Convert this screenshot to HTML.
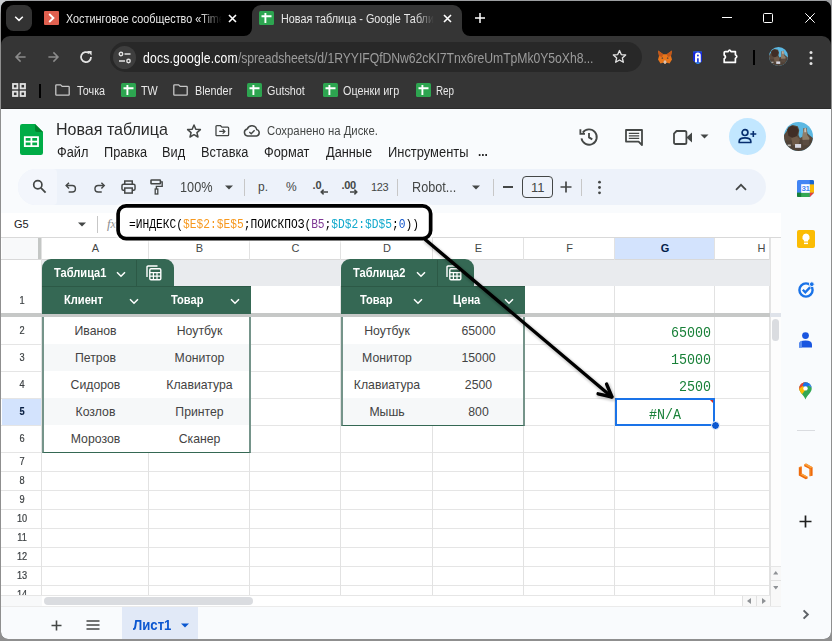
<!DOCTYPE html>
<html lang="ru">
<head>
<meta charset="utf-8">
<title>Новая таблица - Google Таблицы</title>
<style>
*{box-sizing:border-box;margin:0;padding:0}
html,body{width:832px;height:641px;overflow:hidden}
body{font-family:"Liberation Sans",sans-serif;background:#8f8f8f;position:relative}
.a{position:absolute}
.t{position:absolute;white-space:nowrap;line-height:1}
#edge{left:0;top:0;width:832px;height:641px;background:radial-gradient(circle at 0 0,#cbced2 0,#cbced2 4px,rgba(203,206,210,0) 14px),linear-gradient(180deg,#9c9ea1 0,#9c9ea1 2px,#8f8f8f 24px)}
#win{left:1px;top:1.1px;width:829.6px;height:638px;border-radius:7px 7px 7px 7px;overflow:hidden;background:#000}
/* chrome */
#tabstrip{left:0;top:0;width:830px;height:36px;background:#000}
#tbar{left:0;top:35px;width:830px;height:73px;background:#353535;border-radius:9px 9px 0 0;border-bottom:1px solid #2c2c2c}
#page{left:0;top:108px;width:830px;height:530px;background:#f9fbfd}
.ct{color:#e8e8e8;font-size:12px;transform:scaleX(.9);transform-origin:0 0}
/* sheets */
.menu{font-size:14px;color:#1f1f1f;top:36px;transform:scaleX(.912);transform-origin:0 0}
#pill{left:17px;top:60px;width:748px;height:36px;border-radius:18px;background:#edf2fa}
.sep{position:absolute;top:70px;width:1px;height:17px;background:#c7c7c7}
#grid{left:0;top:104px;width:780px;height:394px;background:#fff;overflow:hidden}
.vl{position:absolute;width:1px;margin-left:-.6px;background:#e2e2e2;top:26px;height:362px}
.hl{position:absolute;height:1px;background:#e5e5e5;left:0;width:770px}
.ch{position:absolute;top:25px;height:20px;font-size:11px;color:#444746;text-align:center;line-height:20px}
.rh{position:absolute;left:1px;width:40px;font-size:10px;color:#3c4043;text-align:center;transform:scaleX(.92);margin-top:-.2px;-webkit-text-stroke:.2px #3c4043}
.cell{position:absolute;font-size:12.25px;color:#434343;text-align:center;height:27px;line-height:28.5px;white-space:nowrap}
.hd{position:absolute;font-size:12px;color:#fff;font-weight:bold;white-space:nowrap;line-height:1;transform:scaleX(.925);transform-origin:0 0}
.g{background:#356854}
.mono{font-family:"Liberation Mono",monospace}
.gm{transform:scaleY(1.1);color:#23803f}
</style>
</head>
<body>
<svg width="0" height="0" style="position:absolute"><defs>
<clipPath id="avc"><circle cx="10" cy="10" r="10"/></clipPath>
<filter id="avb" x="-10%" y="-10%" width="120%" height="120%"><feGaussianBlur stdDeviation=".45"/></filter>
<g id="av"><g clip-path="url(#avc)"><rect width="20" height="20" fill="#5cb8e2"/><g filter="url(#avb)">
<path d="M0 9 L2 6 L3 3.5 L6 2 L9.5 3 L10.5 5.5 L10 9 L11 11 L13 10 L13.2 4.5 L15.5 4 L16.2 8 L18 9.5 L20 11 V20 H0Z" fill="#5a4a3c"/>
<path d="M2.2 5 L5 2.6 L9 3.4 L10 6 L9 9.5 L6 11 L3 9.5Z" fill="#3f2f27"/>
<path d="M13.4 4.6 L15.4 4.2 L16 9 L17.5 11 L17 16 L13 16 L12.6 10.5Z" fill="#8d7d69"/>
<path d="M14 4.4 L15.2 4.2 L15.4 7 L14 7Z" fill="#c9c3bb"/>
<path d="M0 13 L20 12 V20 H0Z" fill="#4e4036" opacity=".8"/>
<path d="M5 11 L9 10 L11 12 L10 16 L6 16Z" fill="#6e5a48"/>
<rect x="7.6" y="15.2" width="4.2" height="2.6" fill="#d8d8e2"/>
<rect x="2.5" y="15.5" width="2.2" height="1.2" fill="#b9b5b0"/>
</g></g></g></defs></svg>
<div id="edge" class="a"></div>
<div id="win" class="a">
<div id="tabstrip" class="a"></div>
<!--CHROME-->
<!-- tab search button -->
<div class="a" style="left:5.2px;top:3.9px;width:25.4px;height:26.1px;border-radius:7.5px;background:#333"></div>
<svg class="a" style="left:12px;top:12.5px" width="12" height="10" viewBox="0 0 12 10"><path d="M2.2 2.8 L6 6.4 L9.8 2.8" fill="none" stroke="#fff" stroke-width="1.5"/></svg>
<!-- tab 1 -->
<div class="a" style="left:43px;top:10px;width:15px;height:14px;background:#e0604f;border-radius:1px"></div>
<svg class="a" style="left:43px;top:10px" width="15" height="14" viewBox="0 0 15 14"><path d="M5.2 3 L9.4 7 L5.2 11" fill="none" stroke="#fff" stroke-width="1.9"/></svg>
<div class="t ct" id="tab1" style="left:65px;top:11.7px;width:173px;overflow:hidden;-webkit-mask-image:linear-gradient(90deg,#000 150px,transparent 173px)">Хостинговое сообщество «Timeweb</div>
<svg class="a" style="left:226px;top:12px" width="11" height="11" viewBox="0 0 11 11"><path d="M2 2 L9 9 M9 2 L2 9" stroke="#fff" stroke-width="1.6"/></svg>
<!-- active tab -->
<div class="a" style="left:251px;top:4.2px;width:210px;height:31.8px;background:#353535;border-radius:9px 9px 0 0"></div>
<svg class="a" style="left:243px;top:27px" width="8" height="8" viewBox="0 0 8 8"><path d="M8 0 V8 H0 A8 8 0 0 0 8 0Z" fill="#353535"/></svg>
<svg class="a" style="left:461px;top:27px" width="8" height="8" viewBox="0 0 8 8"><path d="M0 0 V8 H8 A8 8 0 0 1 0 0Z" fill="#353535"/></svg>
<svg class="a shi" style="left:258px;top:10px" width="15" height="14" viewBox="0 0 15 14"><rect width="15" height="14" rx="1.5" fill="#2da550"/><path d="M2.5 5.2 H12.5 M6.4 2 V12" stroke="#fff" stroke-width="1.9"/></svg>
<div class="t ct" id="tab2" style="left:280.4px;top:11.7px;width:170px;overflow:hidden;-webkit-mask-image:linear-gradient(90deg,#000 150px,transparent 170px)">Новая таблица - Google Таблицы</div>
<svg class="a" style="left:441px;top:12px" width="11" height="11" viewBox="0 0 11 11"><path d="M2 2 L9 9 M9 2 L2 9" stroke="#fff" stroke-width="1.6"/></svg>
<svg class="a" style="left:473px;top:11px" width="12" height="12" viewBox="0 0 12 12"><path d="M6 1 V11 M1 6 H11" stroke="#fff" stroke-width="1.5"/></svg>
<!-- window controls -->
<div class="a" style="left:721px;top:16px;width:10px;height:1px;background:#fff"></div>
<div class="a" style="left:762px;top:12px;width:10px;height:10px;border:1px solid #fff;border-radius:1.5px"></div>
<svg class="a" style="left:804px;top:12px" width="10" height="10" viewBox="0 0 10 10"><path d="M0.3 0.3 L9.7 9.7 M9.7 0.3 L0.3 9.7" stroke="#fff" stroke-width="1"/></svg>
<!--/CHROME-->
<div id="tbar" class="a"></div>
<!--TB-->
<!-- nav -->
<svg class="a" style="left:12px;top:49px" width="14" height="14" viewBox="0 0 14 14"><path d="M12.6 7 H3.2 M7.6 2.4 L3 7 L7.6 11.6" fill="none" stroke="#8b8b8b" stroke-width="1.5"/></svg>
<svg class="a" style="left:45px;top:49px" width="14" height="14" viewBox="0 0 14 14"><path d="M2.4 7 H11.8 M7.4 2.4 L12 7 L7.4 11.6" fill="none" stroke="#8b8b8b" stroke-width="1.5"/></svg>
<svg class="a" style="left:78px;top:49px" width="14" height="14" viewBox="0 0 14 14"><path d="M12 7 A5 5 0 1 1 10.2 3.2" fill="none" stroke="#e3e3e3" stroke-width="1.8"/><path d="M8 1 H12.6 V5.6 Z" fill="#e3e3e3"/></svg>
<div class="a" style="left:109px;top:41.3px;width:532px;height:29.6px;border-radius:15px;background:#282828"></div>
<div class="a" style="left:112px;top:45px;width:23px;height:23px;border-radius:12px;background:#3e3e3e"></div>
<svg class="a" style="left:117px;top:50px" width="14" height="13" viewBox="0 0 14 13"><path d="M6.5 3 H12.5 M1 10 H7" stroke="#e3e3e3" stroke-width="1.5"/><circle cx="3" cy="3" r="1.7" fill="none" stroke="#e3e3e3" stroke-width="1.4"/><circle cx="10.5" cy="10" r="1.7" fill="none" stroke="#e3e3e3" stroke-width="1.4"/></svg>
<div class="t" id="url" style="left:142px;top:49.5px;font-size:14px;color:#9c9c9c;transform:scaleX(.873);transform-origin:0 0"><span style="color:#fff;letter-spacing:.19px">docs.google.com</span><span style="letter-spacing:-.06px">/spreadsheets/d/1RYYIFQfDNw62cKI7Tnx6reUmTpMk0Y5oXh8...</span></div>
<svg class="a" style="left:610px;top:47.2px" width="17" height="17" viewBox="0 0 24 24"><path d="M12 3.6 L14.5 9.3 L20.7 9.9 L16 14 L17.4 20.1 L12 16.9 L6.6 20.1 L8 14 L3.3 9.9 L9.5 9.3 Z" fill="none" stroke="#e3e3e3" stroke-width="1.9" stroke-linejoin="round"/></svg>
<!-- metamask fox -->
<svg class="a" style="left:656px;top:49px" width="16" height="15" viewBox="0 0 16 15"><path d="M1 0.5 L6.3 4.2 H9.7 L15 0.5 L14 6 L15 9.5 L12.5 13.5 L9.5 12.6 L8.6 13.8 H7.4 L6.5 12.6 L3.5 13.5 L1 9.5 L2 6 Z" fill="#e8761b"/><path d="M1 0.5 L6.3 4.2 L5 7 L2 6Z M15 0.5 L9.7 4.2 L11 7 L14 6Z" fill="#c4571a"/><path d="M6.5 12.6 L7 10.5 H9 L9.5 12.6 L8.6 13.8 H7.4Z" fill="#d7c1b3"/><path d="M5 7 L6.3 8.6 L4.6 8.8Z M11 7 L9.7 8.6 L11.4 8.8Z" fill="#233447"/></svg>
<!-- shield -->
<svg class="a" style="left:691.6px;top:49.6px" width="9.8" height="13.7" viewBox="0 0 9.6 13.4"><defs><linearGradient id="shg" x1="0" y1="0" x2="0" y2="1"><stop offset="0" stop-color="#2b6cf0"/><stop offset=".15" stop-color="#1624d6"/><stop offset=".75" stop-color="#1830dc"/><stop offset="1" stop-color="#2eb4f4"/></linearGradient></defs><path d="M0 0.6 L4.8 0 L9.6 0.6 V9.6 L4.8 13.4 L0 9.6Z" fill="url(#shg)"/><path d="M2 11 V4.2 A2.8 2.8 0 0 1 7.6 4.2 V11 H5.6 V7 H4 V11Z" fill="#fff"/><circle cx="4.8" cy="4.4" r=".9" fill="#1830dc"/></svg>
<!-- puzzle -->
<svg class="a" style="left:721px;top:47px" width="17" height="16" viewBox="0 0 17 16"><path d="M3.2 3.6 H6.2 Q7.6 0.8 9 3.6 H13.4 V6.8 Q16.2 8.6 13.4 10.4 V14.4 H2.2 V10.8 Q4.8 9 2.2 7 V4.6 Q2.2 3.6 3.2 3.6Z" fill="none" stroke="#fff" stroke-width="1.7" stroke-linejoin="round"/></svg>
<div class="a" style="left:752px;top:49px;width:2px;height:15px;background:#000"></div>
<!-- avatar -->
<svg class="a" style="left:768.2px;top:46.4px" width="19" height="19" viewBox="0 0 20 20"><use href="#av"/></svg>
<svg class="a" style="left:807px;top:49px" width="6" height="16" viewBox="0 0 6 16"><circle cx="3" cy="2.5" r="1.5" fill="#e3e3e3"/><circle cx="3" cy="8" r="1.5" fill="#e3e3e3"/><circle cx="3" cy="13.5" r="1.5" fill="#e3e3e3"/></svg>

<svg class="a" style="left:11px;top:82px" width="14" height="14" viewBox="0 0 14 14"><g fill="none" stroke="#e3e3e3" stroke-width="1.8"><rect x="1" y="1" width="4.4" height="4.4"/><rect x="8.6" y="1" width="4.4" height="4.4"/><rect x="1" y="8.6" width="4.4" height="4.4"/><rect x="8.6" y="8.6" width="4.4" height="4.4"/></g></svg>
<div class="a" style="left:38px;top:83px;width:2px;height:14px;background:#000"></div>
<svg class="a" style="left:54px;top:83px" width="15" height="12" viewBox="0 0 15 12"><path d="M1.5 0.8 H5.6 L7.2 2.4 H13.5 Q14.2 2.4 14.2 3.1 V10.5 Q14.2 11.2 13.5 11.2 H1.5 Q0.8 11.2 0.8 10.5 V1.5 Q0.8 0.8 1.5 0.8Z" fill="none" stroke="#c7c7c7" stroke-width="1.3"/></svg><div class="t ct" id="bm1" style="left:76px;top:84px">Точка</div><svg class="a" style="left:120px;top:82px" width="15" height="14" viewBox="0 0 15 14"><rect width="15" height="14" rx="1.5" fill="#2da550"/><path d="M2.5 5.2 H12.5 M6.4 2 V12" stroke="#fff" stroke-width="1.9"/></svg><div class="t ct" id="bm2" style="left:140px;top:84px">TW</div><svg class="a" style="left:172px;top:83px" width="15" height="12" viewBox="0 0 15 12"><path d="M1.5 0.8 H5.6 L7.2 2.4 H13.5 Q14.2 2.4 14.2 3.1 V10.5 Q14.2 11.2 13.5 11.2 H1.5 Q0.8 11.2 0.8 10.5 V1.5 Q0.8 0.8 1.5 0.8Z" fill="none" stroke="#c7c7c7" stroke-width="1.3"/></svg><div class="t ct" id="bm3" style="left:194px;top:84px">Blender</div><svg class="a" style="left:246px;top:82px" width="15" height="14" viewBox="0 0 15 14"><rect width="15" height="14" rx="1.5" fill="#2da550"/><path d="M2.5 5.2 H12.5 M6.4 2 V12" stroke="#fff" stroke-width="1.9"/></svg><div class="t ct" id="bm4" style="left:266px;top:84px">Gutshot</div><svg class="a" style="left:322px;top:82px" width="15" height="14" viewBox="0 0 15 14"><rect width="15" height="14" rx="1.5" fill="#2da550"/><path d="M2.5 5.2 H12.5 M6.4 2 V12" stroke="#fff" stroke-width="1.9"/></svg><div class="t ct" id="bm5" style="left:342px;top:84px">Оценки игр</div><svg class="a" style="left:415px;top:82px" width="15" height="14" viewBox="0 0 15 14"><rect width="15" height="14" rx="1.5" fill="#2da550"/><path d="M2.5 5.2 H12.5 M6.4 2 V12" stroke="#fff" stroke-width="1.9"/></svg><div class="t ct" id="bm6" style="left:435px;top:84px;transform:scaleX(.82)">Rep</div>
<!--/TB-->
<div id="page" class="a">

<!-- sheets logo -->
<svg class="a" style="left:19.3px;top:14.5px" width="23" height="31" viewBox="0 0 23 31"><path d="M2.2 0 H15 L23 8 V28.8 Q23 31 20.8 31 H2.2 Q0 31 0 28.8 V2.2 Q0 0 2.2 0Z" fill="#00ac47"/><path d="M15 0 L23 8 H17 Q15 8 15 6Z" fill="#00832d"/><path d="M3.9 12.2 H18.9 V23.1 H3.9Z M5.7 14 V16.8 H10.5 V14Z M12.3 14 V16.8 H17.1 V14Z M5.7 18.5 V21.3 H10.5 V18.5Z M12.3 18.5 V21.3 H17.1 V18.5Z" fill="#fff" fill-rule="evenodd"/></svg>
<div class="t" id="title" style="left:55px;top:13.2px;font-size:16.6px;color:#2a2a2a;transform:scaleX(.967);transform-origin:0 0">Новая таблица</div>
<!-- star -->
<svg class="a" style="left:184px;top:13px" width="18" height="18" viewBox="0 0 24 24"><path d="M12 4 L14.4 9.6 L20.5 10.1 L15.9 14.1 L17.3 20 L12 16.9 L6.7 20 L8.1 14.1 L3.5 10.1 L9.6 9.6 Z" fill="none" stroke="#444746" stroke-width="2" stroke-linejoin="round"/></svg>
<!-- move -->
<svg class="a" style="left:214.3px;top:16.2px" width="14.6" height="11.4" viewBox="0 0 16 13"><path d="M1.8 0.8 H6 L7.6 2.4 H14.2 Q15.2 2.4 15.2 3.4 V11.2 Q15.2 12.2 14.2 12.2 H1.8 Q0.8 12.2 0.8 11.2 V1.8 Q0.8 0.8 1.8 0.8Z" fill="none" stroke="#444746" stroke-width="1.5"/><path d="M4.5 7.3 H10.5 M8.4 4.8 L11 7.3 L8.4 9.8" fill="none" stroke="#444746" stroke-width="1.4"/></svg>
<!-- cloud -->
<svg class="a" style="left:242px;top:15px" width="18" height="13" viewBox="0 0 18 13"><path d="M4.6 12 A3.6 3.6 0 0 1 4.3 4.9 A5 5 0 0 1 13.8 5.6 A3.3 3.3 0 0 1 13.6 12 Z" fill="none" stroke="#444746" stroke-width="1.5"/><path d="M6.3 8 L8.2 9.8 L11.6 6.2" fill="none" stroke="#444746" stroke-width="1.4"/></svg>
<div class="t" id="saved" style="left:266px;top:16px;font-size:12px;color:#444746;transform:scaleX(.945);transform-origin:0 0">Сохранено на Диске.</div>
<div class="t menu" id="m1" style="left:56px">Файл</div>
<div class="t menu" id="m2" style="left:103px">Правка</div>
<div class="t menu" id="m3" style="left:161px">Вид</div>
<div class="t menu" id="m4" style="left:200px">Вставка</div>
<div class="t menu" id="m5" style="left:263px">Формат</div>
<div class="t menu" id="m6" style="left:325px">Данные</div>
<div class="t menu" id="m7" style="left:387px;transform:scaleX(.922)">Инструменты</div>
<div class="t menu" id="m8" style="left:477px;font-weight:bold;font-size:13px;letter-spacing:0">...</div>
<!-- history -->
<svg class="a" style="left:577px;top:17px" width="22" height="22" viewBox="0 0 24 24"><path d="M5.2 7.2 A8.4 8.4 0 1 1 3.8 13.5" fill="none" stroke="#444746" stroke-width="2"/><path d="M2.6 3.6 V8.6 H7.6" fill="none" stroke="#444746" stroke-width="2"/><path d="M12 7.5 V12.4 L15.6 14.6" fill="none" stroke="#444746" stroke-width="2"/></svg>
<!-- comment -->
<svg class="a" style="left:623.6px;top:19.5px" width="18" height="17" viewBox="0 0 18 17"><path d="M1 1 H17 V16 L13.6 12.6 H1 Z" fill="none" stroke="#444746" stroke-width="1.8" stroke-linejoin="round"/><path d="M3.8 4.4 H14.2 M3.8 6.9 H14.2 M3.8 9.4 H14.2" stroke="#444746" stroke-width="1.2"/></svg>
<!-- video -->
<svg class="a" style="left:672px;top:21px" width="20" height="15" viewBox="0 0 20 15"><path d="M3.6 1 H11.8 Q13.4 1 13.4 2.6 V12.4 Q13.4 14 11.8 14 H2.6 Q1 14 1 12.4 V3.6 Z" fill="none" stroke="#444746" stroke-width="1.8" stroke-linejoin="round"/><path d="M13.4 7.5 L19 2.6 V12.4 Z" fill="#444746"/></svg>
<svg class="a" style="left:699px;top:25px" width="9" height="5" viewBox="0 0 9 5"><path d="M0.5 0.5 H8.5 L4.5 4.5Z" fill="#444746"/></svg>
<!-- share -->
<div class="a" style="left:728px;top:9px;width:37px;height:37px;border-radius:19px;background:#c2e7ff"></div>
<svg class="a" style="left:737px;top:19px" width="19" height="16" viewBox="0 0 19 16"><circle cx="7" cy="4.6" r="2.9" fill="none" stroke="#062e6f" stroke-width="1.7"/><path d="M1.2 14.5 V13.2 Q1.2 9.8 7 9.8 Q12.8 9.8 12.8 13.2 V14.5 Z" fill="none" stroke="#062e6f" stroke-width="1.7" stroke-linejoin="round"/><path d="M15.3 3 V9 M12.3 6 H18.3" stroke="#062e6f" stroke-width="1.6"/></svg>
<!-- avatar -->
<svg class="a" style="left:783px;top:13.3px" width="29" height="29" viewBox="0 0 20 20"><use href="#av"/></svg>
<div id="pill" class="a"></div>
<div class="a" style="left:17px;top:60px;width:39px;height:36px;border-radius:18px 4px 4px 18px;background:#f3f6fc"></div>
<!--PILL-->
<svg class="a" style="left:31px;top:70px" width="15" height="15" viewBox="0 0 15 15"><circle cx="5.8" cy="5.8" r="4.1" fill="none" stroke="#444746" stroke-width="1.7"/><path d="M8.9 8.9 L13.6 13.6" stroke="#444746" stroke-width="1.8"/></svg>
<!-- undo -->
<svg class="a" style="left:63.2px;top:71.4px" width="13.4" height="13.4" viewBox="0 0 15 15"><path d="M3 6.2 H9.2 A3.6 3.6 0 0 1 9.2 13.4 H5.2" fill="none" stroke="#444746" stroke-width="1.6"/><path d="M5.6 3 L2.4 6.2 L5.6 9.4" fill="none" stroke="#444746" stroke-width="1.6"/></svg>
<!-- redo -->
<svg class="a" style="left:91.8px;top:71.4px" width="13.4" height="13.4" viewBox="0 0 15 15"><path d="M12 6.2 H5.8 A3.6 3.6 0 0 0 5.8 13.4 H9.8" fill="none" stroke="#444746" stroke-width="1.6"/><path d="M9.4 3 L12.6 6.2 L9.4 9.4" fill="none" stroke="#444746" stroke-width="1.6"/></svg>
<!-- print -->
<svg class="a" style="left:120.3px;top:71.2px" width="15" height="14" viewBox="0 0 16 15"><path d="M4 4.5 V1 H12 V4.5" fill="none" stroke="#444746" stroke-width="1.6"/><rect x="1" y="4.6" width="14" height="6.4" rx="1.6" fill="none" stroke="#444746" stroke-width="1.6"/><rect x="4" y="8.6" width="8" height="5.4" fill="#edf2fa" stroke="#444746" stroke-width="1.6"/></svg>
<!-- paint format -->
<svg class="a" style="left:149.2px;top:70.3px" width="13" height="16" viewBox="0 0 13 16"><rect x="1" y="1" width="9.4" height="3.8" rx=".6" fill="none" stroke="#444746" stroke-width="1.6"/><path d="M10.4 2.9 H12.2 V7.4 H6.4 V10" fill="none" stroke="#444746" stroke-width="1.4"/><rect x="5.2" y="10" width="2.6" height="5" fill="none" stroke="#444746" stroke-width="1.3"/></svg>
<div class="t" id="zoom" style="left:179px;top:71px;font-size:14px;color:#444746;transform:scaleX(.908);transform-origin:0 0">100%</div>
<svg class="a" style="left:224px;top:76px" width="8" height="5" viewBox="0 0 8 5"><path d="M0 0.5 H8 L4 4.5Z" fill="#444746"/></svg>
<div class="sep" style="left:243px"></div>
<div class="t" id="cur" style="left:257px;top:72px;font-size:12px;color:#444746">р.</div>
<div class="t" id="pct" style="left:285px;top:72px;font-size:12px;color:#444746">%</div>
<div class="t" id="d0" style="left:311.5px;top:70.5px;font-size:11px;color:#444746;font-weight:bold">.0</div>
<svg class="a" style="left:319px;top:79.6px" width="8" height="6" viewBox="0 0 8 6"><path d="M8 3 H1.2 M3.6 0.6 L1.2 3 L3.6 5.4" fill="none" stroke="#444746" stroke-width="1.5"/></svg>
<div class="t" id="d00" style="left:340.5px;top:70.5px;font-size:11px;color:#444746;font-weight:bold;letter-spacing:-.3px">.00</div>
<svg class="a" style="left:348.5px;top:79.6px" width="8" height="6" viewBox="0 0 8 6"><path d="M0 3 H6.8 M4.4 0.6 L6.8 3 L4.4 5.4" fill="none" stroke="#444746" stroke-width="1.5"/></svg>
<div class="t" id="n123" style="left:370px;top:73px;font-size:11px;color:#444746;letter-spacing:-.4px">123</div>
<div class="sep" style="left:396px"></div>
<div class="t" id="font" style="left:411px;top:71px;font-size:14px;color:#444746;transform:scaleX(.903);transform-origin:0 0">Robot...</div>
<svg class="a" style="left:471px;top:76px" width="8" height="5" viewBox="0 0 8 5"><path d="M0 0.5 H8 L4 4.5Z" fill="#444746"/></svg>
<div class="sep" style="left:492px"></div>
<div class="a" style="left:502px;top:77px;width:10px;height:2px;background:#444746"></div>
<div class="a" style="left:521px;top:67px;width:31px;height:22px;border:1px solid #444746;border-radius:4px"></div>
<div class="t" id="fs" style="left:530px;top:72px;font-size:13px;color:#444746">11</div>
<svg class="a" style="left:559px;top:72px" width="12" height="12" viewBox="0 0 12 12"><path d="M6 0.5 V11.5 M0.5 6 H11.5" stroke="#444746" stroke-width="1.7"/></svg>
<div class="sep" style="left:580px"></div>
<svg class="a" style="left:596px;top:71px" width="5" height="15" viewBox="0 0 5 15"><circle cx="2.5" cy="2.2" r="1.4" fill="#444746"/><circle cx="2.5" cy="7.5" r="1.4" fill="#444746"/><circle cx="2.5" cy="12.8" r="1.4" fill="#444746"/></svg>
<svg class="a" style="left:734px;top:74px" width="12" height="8" viewBox="0 0 12 8"><path d="M1 6.8 L6 1.8 L11 6.8" fill="none" stroke="#444746" stroke-width="1.7"/></svg>
<!--/PILL-->
<div id="grid" class="a">
<!--G1-->
<div class="a" style="left:0;top:0;width:780px;height:24px;background:#fff"></div>
<div class="t" id="nb" style="left:13px;top:6px;font-size:11px;color:#202124">G5</div>
<svg class="a" style="left:77px;top:9px" width="8" height="5" viewBox="0 0 8 5"><path d="M0 0.5 H8 L4 4.5Z" fill="#444746"/></svg>
<div class="a" style="left:96px;top:3px;width:1px;height:17px;background:#c7c7c7"></div>
<div class="t" id="fx" style="left:106px;top:4px;font-size:13px;color:#8a8d90;font-family:'Liberation Serif',serif;font-style:italic">fx</div>
<div class="a" style="left:0;top:24px;width:780px;height:1px;background:#d9d9d9"></div>
<div class="a" style="left:0;top:25px;width:770px;height:21px;background:#fff"></div>
<div class="a" style="left:1px;top:25px;width:36px;height:21px;background:#f8f9fa"></div>
<div class="a" style="left:37px;top:25px;width:4px;height:21px;background:#c4c7c5"></div>
<div class="a" style="left:614px;top:25px;width:100px;height:21px;background:#d3e3fd"></div>
<div class="ch" style="left:41px;width:107px">A</div>
<div class="ch" style="left:148px;width:101px">B</div>
<div class="ch" style="left:249px;width:91px">C</div>
<div class="ch" style="left:340px;width:92px">D</div>
<div class="ch" style="left:432px;width:91px">E</div>
<div class="ch" style="left:523px;width:91px">F</div>
<div class="ch" style="left:614px;width:100px;font-weight:bold;color:#041e49">G</div>
<div class="ch" style="left:714px;width:56px;text-align:left;padding-left:42.5px">H</div>
<div class="hl" style="top:46px;background:#d9d9d9"></div>
<div class="a" style="left:41px;top:47px;width:729px;height:26px;background:#e9ebee"></div>
<div class="a" style="left:1px;top:185px;width:40px;height:27px;background:#d3e3fd"></div>
<div class="hl" style="top:131px"></div>
<div class="hl" style="top:158px"></div>
<div class="hl" style="top:185px"></div>
<div class="hl" style="top:212px"></div>
<div class="hl" style="top:239px"></div>
<div class="hl" style="top:258px"></div>
<div class="hl" style="top:277px"></div>
<div class="hl" style="top:296px"></div>
<div class="hl" style="top:315px"></div>
<div class="hl" style="top:334px"></div>
<div class="hl" style="top:353px"></div>
<div class="hl" style="top:372px"></div>
<div class="hl" style="top:391px"></div>
<div class="vl" style="left:41px;top:25px;height:357px"></div>
<div class="vl" style="left:148px;top:25px;height:357px"></div>
<div class="vl" style="left:249px;top:25px;height:357px"></div>
<div class="vl" style="left:340px;top:25px;height:357px"></div>
<div class="vl" style="left:432px;top:25px;height:357px"></div>
<div class="vl" style="left:523px;top:25px;height:357px"></div>
<div class="vl" style="left:614px;top:25px;height:357px"></div>
<div class="vl" style="left:714px;top:25px;height:357px"></div>
<div class="vl" style="left:769px;top:25px;height:357px"></div>
<div class="a" style="left:42px;top:47px;width:728px;height:26px;background:#e9ebee"></div>
<div class="rh" style="top:73px;height:28px;line-height:29px">1</div>
<div class="rh" style="top:104px;height:27px;line-height:28px">2</div>
<div class="rh" style="top:131px;height:27px;line-height:28px">3</div>
<div class="rh" style="top:158px;height:27px;line-height:28px">4</div>
<div class="rh" style="top:185px;height:27px;line-height:28px;font-weight:bold;color:#041e49">5</div>
<div class="rh" style="top:212px;height:27px;line-height:28px">6</div>
<div class="rh" style="top:239px;height:19px;line-height:20px">7</div>
<div class="rh" style="top:258px;height:19px;line-height:20px">8</div>
<div class="rh" style="top:277px;height:19px;line-height:20px">9</div>
<div class="rh" style="top:296px;height:19px;line-height:20px">10</div>
<div class="rh" style="top:315px;height:19px;line-height:20px">11</div>
<div class="rh" style="top:334px;height:19px;line-height:20px">12</div>
<div class="rh" style="top:353px;height:19px;line-height:20px">13</div>
<div class="rh" style="top:372px;height:19px;line-height:20px">14</div>
<div class="a" style="left:0;top:100.4px;width:770px;height:3.4px;background:#c6c8c7"></div>
<!--/G1-->
<!--G2-->
<div class="a g" style="left:41px;top:46.3px;width:132px;height:27.7px;border-radius:9px 9px 0 0"></div>
<div class="a" style="left:135px;top:47px;width:1px;height:26px;background:#2c5946"></div>
<div class="hd" id="tn1" style="left:53px;top:54px">Таблица1</div>
<svg class="a" style="left:115px;top:58px" width="10" height="7" viewBox="0 0 10 7"><path d="M1 1.2 L5 5.2 L9 1.2" fill="none" stroke="#fff" stroke-width="1.5"/></svg>
<svg class="a" style="left:145px;top:52px" width="16" height="16" viewBox="0 0 16 16"><path d="M1 12 V2.2 Q1 1 2.2 1 H11.5" fill="none" stroke="#fff" stroke-width="1.4"/><rect x="3.8" y="3.8" width="11" height="11" rx="1.2" fill="none" stroke="#fff" stroke-width="1.4"/><path d="M3.8 7.6 H14.8 M3.8 11.2 H14.8 M7.4 7.6 V14.8 M11 7.6 V14.8" stroke="#fff" stroke-width="1.2"/></svg>
<div class="a g" style="left:41px;top:73px;width:209px;height:28px"></div>
<div class="a" style="left:41px;top:73px;width:209px;height:1px;background:#2c5946"></div>
<div class="hd" id="h11" style="left:63px;top:81px">Клиент</div>
<svg class="a" style="left:128px;top:85px" width="10" height="7" viewBox="0 0 10 7"><path d="M1 1.2 L5 5.2 L9 1.2" fill="none" stroke="#fff" stroke-width="1.5"/></svg>
<div class="hd" id="h12" style="left:170px;top:81px">Товар</div>
<svg class="a" style="left:229px;top:85px" width="10" height="7" viewBox="0 0 10 7"><path d="M1 1.2 L5 5.2 L9 1.2" fill="none" stroke="#fff" stroke-width="1.5"/></svg>
<div class="a" style="left:41px;top:104px;width:209px;height:136px;background:#fff;border:solid #356854;border-width:0 2px 1px 2px;border-left-color:#75948a;border-right-color:#75948a"></div>
<div class="cell m" id="ctn100" style="left:41px;top:104px;width:107px">Иванов</div>
<div class="cell m" id="ctn101" style="left:148px;top:104px;width:101px">Ноутбук</div>
<div class="a" style="left:43px;top:131px;width:205px;height:27px;background:#f6f8f9"></div>
<div class="cell m" id="ctn110" style="left:41px;top:131px;width:107px">Петров</div>
<div class="cell m" id="ctn111" style="left:148px;top:131px;width:101px">Монитор</div>
<div class="cell m" id="ctn120" style="left:41px;top:158px;width:107px">Сидоров</div>
<div class="cell m" id="ctn121" style="left:148px;top:158px;width:101px">Клавиатура</div>
<div class="a" style="left:43px;top:185px;width:205px;height:27px;background:#f6f8f9"></div>
<div class="cell m" id="ctn130" style="left:41px;top:185px;width:107px">Козлов</div>
<div class="cell m" id="ctn131" style="left:148px;top:185px;width:101px">Принтер</div>
<div class="cell m" id="ctn140" style="left:41px;top:212px;width:107px">Морозов</div>
<div class="cell m" id="ctn141" style="left:148px;top:212px;width:101px">Сканер</div>
<div class="a g" style="left:340px;top:46.3px;width:133px;height:27.7px;border-radius:9px 9px 0 0"></div>
<div class="a" style="left:436px;top:47px;width:1px;height:26px;background:#2c5946"></div>
<div class="hd" id="tn2" style="left:352px;top:54px">Таблица2</div>
<svg class="a" style="left:415px;top:58px" width="10" height="7" viewBox="0 0 10 7"><path d="M1 1.2 L5 5.2 L9 1.2" fill="none" stroke="#fff" stroke-width="1.5"/></svg>
<svg class="a" style="left:445px;top:52px" width="16" height="16" viewBox="0 0 16 16"><path d="M1 12 V2.2 Q1 1 2.2 1 H11.5" fill="none" stroke="#fff" stroke-width="1.4"/><rect x="3.8" y="3.8" width="11" height="11" rx="1.2" fill="none" stroke="#fff" stroke-width="1.4"/><path d="M3.8 7.6 H14.8 M3.8 11.2 H14.8 M7.4 7.6 V14.8 M11 7.6 V14.8" stroke="#fff" stroke-width="1.2"/></svg>
<div class="a g" style="left:340px;top:73px;width:184px;height:28px"></div>
<div class="a" style="left:340px;top:73px;width:184px;height:1px;background:#2c5946"></div>
<div class="hd" id="h21" style="left:359px;top:81px">Товар</div>
<svg class="a" style="left:412px;top:85px" width="10" height="7" viewBox="0 0 10 7"><path d="M1 1.2 L5 5.2 L9 1.2" fill="none" stroke="#fff" stroke-width="1.5"/></svg>
<div class="hd" id="h22" style="left:452px;top:81px">Цена</div>
<svg class="a" style="left:503px;top:85px" width="10" height="7" viewBox="0 0 10 7"><path d="M1 1.2 L5 5.2 L9 1.2" fill="none" stroke="#fff" stroke-width="1.5"/></svg>
<div class="a" style="left:340px;top:104px;width:184px;height:109px;background:#fff;border:solid #356854;border-width:0 2px 1px 2px;border-left-color:#75948a;border-right-color:#75948a"></div>
<div class="cell m" id="ctn200" style="left:340px;top:104px;width:92px">Ноутбук</div>
<div class="cell m" id="ctn201" style="left:432px;top:104px;width:91px">65000</div>
<div class="a" style="left:342px;top:131px;width:180px;height:27px;background:#f6f8f9"></div>
<div class="cell m" id="ctn210" style="left:340px;top:131px;width:92px">Монитор</div>
<div class="cell m" id="ctn211" style="left:432px;top:131px;width:91px">15000</div>
<div class="cell m" id="ctn220" style="left:340px;top:158px;width:92px">Клавиатура</div>
<div class="cell m" id="ctn221" style="left:432px;top:158px;width:91px">2500</div>
<div class="a" style="left:342px;top:185px;width:180px;height:27px;background:#f6f8f9"></div>
<div class="cell m" id="ctn230" style="left:340px;top:185px;width:92px">Мышь</div>
<div class="cell m" id="ctn231" style="left:432px;top:185px;width:91px">800</div>
<div class="t mono m gm" id="g0" style="right:70px;top:114px;font-size:13.33px;color:#188038">65000</div>
<div class="t mono m gm" id="g1" style="right:70px;top:141px;font-size:13.33px;color:#188038">15000</div>
<div class="t mono m gm" id="g2" style="right:70px;top:168px;font-size:13.33px;color:#188038">2500</div>
<div class="t mono m gm" id="g3" style="left:614px;width:100px;text-align:center;top:195.5px;font-size:13.33px;color:#188038">#N/A</div>
<div class="a" style="left:614px;top:185px;width:100px;height:28px;border:2px solid #1a73e8"></div>
<svg class="a" style="left:708.5px;top:187px" width="3.5" height="3.5" viewBox="0 0 6 6"><path d="M0 0 H6 V6Z" fill="#d93025"/></svg>
<div class="a" style="left:709.7px;top:208px;width:9px;height:9px;border-radius:5px;background:#0b57d0;border:1px solid #fff"></div>
<div class="a" style="left:769px;top:25px;width:11px;height:357px;background:#fdfdfd;border-left:1px solid #e4e4e4"></div>
<div class="a" style="left:769px;top:100.4px;width:11px;height:3.4px;background:#dfe3ea"></div>
<div class="a" style="left:771.2px;top:105.6px;width:7px;height:22.4px;border-radius:4px;background:#dadce0"></div>
<div class="a" style="left:0;top:382px;width:780px;height:12px;background:#fff;border-top:1px solid #e6e6e6;border-bottom:1px solid #ebebeb"></div><div class="a" style="left:0;top:383px;width:41px;height:10px;background:#f8f9fa"></div>
<div class="a" style="left:43px;top:384.3px;width:209px;height:7.6px;border-radius:4px;background:#dadce0"></div>
<div class="a" style="left:769px;top:353.4px;width:11px;height:40px;background:#f8f8f8;border-left:1px solid #e1e1e1;border-top:1px solid #e6e6e6"></div><div class="a" style="left:769px;top:367.4px;width:11px;height:1px;background:#e1e1e1"></div>
<svg class="a" style="left:771.8px;top:358px" width="5.6" height="3.6" viewBox="0 0 6 4"><path d="M0 4 H6 L3 0Z" fill="#8f9296"/></svg>
<svg class="a" style="left:771.8px;top:373.3px" width="5.6" height="3.6" viewBox="0 0 6 4"><path d="M0 0 H6 L3 4Z" fill="#8f9296"/></svg>
<div class="a" style="left:741px;top:383px;width:28px;height:10px;background:#f8f8f8;border-left:1px solid #e1e1e1"></div>
<div class="a" style="left:755px;top:383px;width:1px;height:10px;background:#e1e1e1"></div>
<svg class="a" style="left:746px;top:385px" width="4" height="6" viewBox="0 0 4 6"><path d="M4 0 V6 L0 3Z" fill="#8f9296"/></svg>
<svg class="a" style="left:761px;top:385px" width="4" height="6" viewBox="0 0 4 6"><path d="M0 0 V6 L4 3Z" fill="#8f9296"/></svg>
<!--/G2-->
</div>
<!--P3-->
<svg class="a" style="left:50px;top:511px" width="11" height="11" viewBox="0 0 11 11"><path d="M5.5 0.5 V10.5 M0.5 5.5 H10.5" stroke="#444746" stroke-width="1.6"/></svg>
<svg class="a" style="left:85px;top:511px" width="14" height="10" viewBox="0 0 14 10"><path d="M0.5 1 H13.5 M0.5 5 H13.5 M0.5 9 H13.5" stroke="#444746" stroke-width="1.6"/></svg>
<div class="a" style="left:121px;top:498px;width:76px;height:33px;background:#e1e9f7"></div>
<div class="t" id="sheet" style="left:132px;top:509px;font-size:14px;font-weight:bold;color:#0b57d0;transform:scaleX(.94);transform-origin:0 0">Лист1</div>
<svg class="a" style="left:180px;top:514px" width="8" height="5" viewBox="0 0 8 5"><path d="M0 0.5 H8 L4 4.5Z" fill="#0b57d0"/></svg>
<svg class="a" style="left:796px;top:70.5px" width="17" height="17" viewBox="0 0 17 17"><path d="M1.6 0 H15.4 Q17 0 17 1.6 V12.8 L12.8 17 H1.6 Q0 17 0 15.4 V1.6 Q0 0 1.6 0Z" fill="#4285f4"/><path d="M0 12.8 H12.8 V17 H1.6 Q0 17 0 15.4Z" fill="#34a853"/><path d="M0 12.8 H4.2 V17 H1.6 Q0 17 0 15.4Z" fill="#188038"/><rect x="12.8" y="4.2" width="4.2" height="8.6" fill="#fbbc04"/><path d="M12.8 12.8 H17 L12.8 17Z" fill="#ea4335"/><path d="M12.8 0 H15.4 Q17 0 17 1.6 V4.2 H12.8Z" fill="#1967d2"/><rect x="4.2" y="4.2" width="8.6" height="8.6" fill="#fff"/><text x="8.4" y="11.4" font-family="Liberation Sans" font-size="8" font-weight="bold" fill="#4285f4" text-anchor="middle" letter-spacing="-.5">31</text></svg>
<svg class="a" style="left:796px;top:121px" width="18" height="18" viewBox="0 0 18 18"><rect width="18" height="18" rx="2" fill="#fbbc04"/><path d="M9 3.6 A3.7 3.7 0 0 0 6.9 10.3 V11.6 H11.1 V10.3 A3.7 3.7 0 0 0 9 3.6Z" fill="#fff"/><rect x="7" y="12.6" width="4" height="1.5" fill="#fff"/></svg>
<svg class="a" style="left:796px;top:170.5px" width="19" height="19" viewBox="0 0 19 19"><circle cx="9" cy="10" r="6.6" fill="none" stroke="#1a73e8" stroke-width="2.4"/><path d="M5.8 9.8 L8.3 12.3 L13 7.4" fill="none" stroke="#1a73e8" stroke-width="2.3"/><circle cx="14.8" cy="4.2" r="2.4" fill="#1a73e8" stroke="#f9fbfd" stroke-width="1"/></svg>
<svg class="a" style="left:797px;top:223px" width="15" height="16" viewBox="0 0 15 16"><circle cx="7.5" cy="3.6" r="3.4" fill="#1a56e0"/><path d="M1 15.4 V12.4 Q1 8.4 7.5 8.4 Q14 8.4 14 12.4 V15.4 Z" fill="#1a56e0"/><path d="M1 15.4 V12.4 Q1 9.6 4 8.8 V15.4Z" fill="#5b8dee"/></svg>
<svg class="a" style="left:798px;top:273px" width="13" height="18" viewBox="0 0 13 18"><defs><clipPath id="pin"><path d="M6.5 0.3 A6.2 6.2 0 0 0 0.3 6.5 C0.3 10.4 4.6 12.6 6.5 17.6 C8.4 12.6 12.7 10.4 12.7 6.5 A6.2 6.2 0 0 0 6.5 0.3Z"/></clipPath></defs><g clip-path="url(#pin)"><rect width="13" height="18" fill="#34a853"/><path d="M0 0 H8 L0 9Z" fill="#ea4335"/><path d="M8 0 H13 V6 L9.5 3.5Z" fill="#4285f4"/><path d="M5 0 H9.5 L11 2 L6.5 6.5 L3 3.5Z" fill="#1a73e8"/><path d="M0 6 L4 4 L7 7 L2.5 13 L0 11Z" fill="#fbbc04"/><path d="M0 0 L5 0 L3.6 3.6 L0 7Z" fill="#ea4335"/></g><circle cx="6.5" cy="6.4" r="2.2" fill="#fff"/></svg>
<div class="a" style="left:796px;top:321px;width:18px;height:1px;background:#dadce0"></div>
<svg class="a" style="left:797px;top:354px" width="16" height="17" viewBox="0 0 16 17"><path d="M6.2 1.6 L8 0.6 L14.6 4.2 V12.8 L11.6 13.2 V6 L6.2 3.2Z" fill="#ee6a0c"/><path d="M6.2 1.6 L8 0.6 L14.6 4.2 L12.6 5.2Z" fill="#fba23c"/><path d="M11.6 6 L13 5.2 V13 L11.6 13.2Z" fill="#f58220"/><path d="M0.8 4.2 L3.8 3.6 V10.6 L9.6 13.8 V15.6 L7.8 16.2 L0.8 12.4Z" fill="#ee6a0c"/><path d="M0.8 4.2 L2.4 3.4 L3.8 3.8 L2.2 4.6Z" fill="#fba23c"/><path d="M3.8 10.6 L9.6 13.8 L8.2 14.6 L2.4 11.4Z" fill="#fba23c"/></svg>
<svg class="a" style="left:798px;top:406px" width="13" height="13" viewBox="0 0 13 13"><path d="M6.5 0.5 V12.5 M0.5 6.5 H12.5" stroke="#1f1f1f" stroke-width="1.7"/></svg>
<svg class="a" style="left:801px;top:500px" width="8" height="11" viewBox="0 0 8 11"><path d="M1.6 1.4 L5.8 5.5 L1.6 9.6" fill="none" stroke="#5f6368" stroke-width="2"/></svg>
<svg class="a" style="left:0;top:0;pointer-events:none" width="829" height="530" viewBox="1 109 829 530"><defs><filter id="gl" x="-5%" y="-20%" width="110%" height="140%"><feGaussianBlur stdDeviation="1.2"/></filter></defs><rect x="118.1" y="205.85" width="312.55" height="32.7" rx="8" fill="none" stroke="#fff" stroke-width="7" opacity=".75" filter="url(#gl)"/><path d="M425.5 239.8 L611.6 396.7 M606.6 384.1 L612 397 L598.1 393.8" stroke="#000" stroke-width="5.5" fill="none" stroke-linecap="round" stroke-linejoin="round" opacity=".18" filter="url(#gl)" transform="translate(1,1.5)"/><rect x="118.1" y="205.85" width="312.55" height="32.7" rx="8" fill="#fff" stroke="#000" stroke-width="3.7"/><path d="M425.5 239.8 L611.6 396.7" stroke="#000" stroke-width="3.4" fill="none" stroke-linecap="round"/><path d="M606.6 384.1 L612 397 L598.1 393.8" stroke="#000" stroke-width="3.4" fill="none" stroke-linecap="round" stroke-linejoin="round"/></svg>
<div class="t mono" id="ftext" style="left:127.5px;top:110px;font-size:12px;transform:scaleX(.9367);transform-origin:0 0"><span style="color:#000">=ИНДЕКС(</span><span style="color:#f7981d">$E$2:$E$5</span><span style="color:#000">;ПОИСКПОЗ(</span><span style="color:#7e3794">B5</span><span style="color:#000">;</span><span style="color:#11a9cc">$D$2:$D$5</span><span style="color:#000">;</span><span style="color:#1155cc">0</span><span style="color:#000">))</span></div>
<!--/P3-->
</div>
</div>
</body>
</html>
